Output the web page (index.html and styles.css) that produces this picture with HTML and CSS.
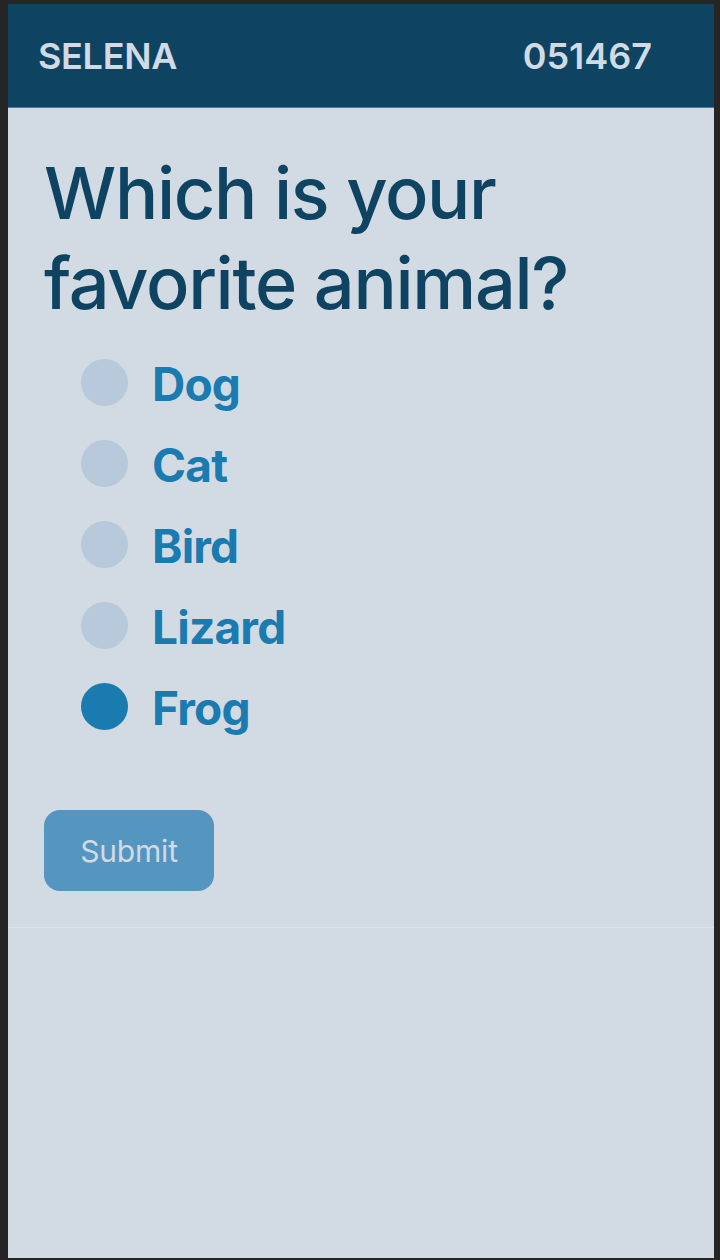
FILE: index.html
```html
<!DOCTYPE html>
<html lang="en">
<head>
    <meta charset="UTF-8">
    <meta name="viewport" content="width=device-width, initial-scale=1.0">
    <title>Poll</title>
    <link rel="stylesheet" href="styles.css">
</head>
<body>
    <div class="app">
        <header class="topbar">
            <span class="user">SELENA</span>
            <span class="code">051467</span>
        </header>

        <!-- Question form -->
        <form class="poll">
            <h1 class="question">Which is your favorite animal?</h1>

            <ul class="options">
                <li class="option"><span class="dot"></span><span class="label">Dog</span></li>
                <li class="option"><span class="dot"></span><span class="label">Cat</span></li>
                <li class="option"><span class="dot"></span><span class="label">Bird</span></li>
                <li class="option"><span class="dot"></span><span class="label">Lizard</span></li>
                <li class="option selected"><span class="dot"></span><span class="label">Frog</span></li>
            </ul>

            <button type="button" class="submit">Submit</button>
        </form>
    </div>
</body>
</html>
```

FILE: styles.css
```css
html, body {
    margin: 0;
    padding: 0;
}
body {
    background-color: #252525;
    font-family: Inter, "Noto Sans", sans-serif;
}
.app {
    margin: 4px 6px 2px 8px;
    height: 1254px;
    background-color: #d2dae3;
    overflow: hidden;
}
.topbar {
    height: 103px;
    border-bottom: 1px solid #4f7894;
    background-color: #0e4462;
    color: #d2dae3;
    display: flex;
    align-items: center;
    justify-content: space-between;
    padding: 0 62px 0 30px;
    font-size: 36px;
    font-weight: 600;
}
.user {
    letter-spacing: -0.3px;
}
.poll {
    padding: 40px 36px 36px 36px;
    border-bottom: 1px solid #dde3ea;
}
.question {
    margin: 0;
    color: #0e4462;
    font-size: 72px;
    font-weight: 500;
    line-height: 90px;
    letter-spacing: -1.3px;
}
.options {
    list-style: none;
    margin: 31px 0 0 0;
    padding: 0 0 0 37px;
    display: flex;
    flex-direction: column;
    gap: 34px;
}
.option {
    display: flex;
    align-items: center;
    gap: 24px;
    height: 47px;
}
.dot {
    width: 47px;
    height: 47px;
    border-radius: 50%;
    background-color: #b7c9da;
}
.option.selected .dot {
    background-color: #1a7bb1;
}
.label {
    color: #1a7bb1;
    font-size: 46px;
    font-weight: 700;
    letter-spacing: -0.8px;
    position: relative;
    top: 1px;
}
.submit {
    margin-top: 80px;
    width: 170px;
    height: 81px;
    border: none;
    border-radius: 16px;
    background-color: #5596c1;
    color: #d2dae3;
    font-family: Inter, "Noto Sans", sans-serif;
    font-size: 30px;
    font-weight: 400;
    letter-spacing: -0.2px;
    cursor: pointer;
}
```
